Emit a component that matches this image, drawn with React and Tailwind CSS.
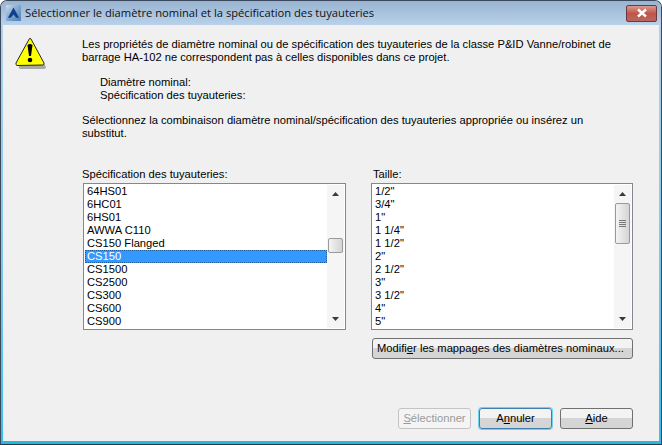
import React from 'react';

const specs = ['64HS01','6HC01','6HS01','AWWA C110','CS150 Flanged','CS150','CS1500','CS2500','CS300','CS600','CS900'];
const sizes = ['1/2"','3/4"','1"','1 1/4"','1 1/2"','2"','2 1/2"','3"','3 1/2"','4"','5"'];
const btnFill = 'bg-gradient-to-b from-[#f3f3f3] from-45% to-[#d5d5d5] to-50% ';

function Warning(){
  return (
    <svg width="32" height="33" viewBox="0 0 32 33">
      <path d="M17 5 L31 30 Q31 32 29 32 L6 32 Q3 32 4 29 Z" fill="#8a8a8a" opacity="0.7" />
      <path d="M14.5 1.5 Q15 1 16 2 L29 26 Q29.5 28 27.5 28 L2 28.5 Q0.5 28 1 26 Z" fill="#ffff00" stroke="#222" strokeWidth="1" strokeLinejoin="round" />
      <path d="M12.5 8 Q15 6 17.5 8 L16 19 L14 19 Z" fill="#000" />
      <circle cx="15" cy="23" r="2.3" fill="#000" />
    </svg>
  );
}

function AppIcon(){
  return (
    <div className="w-[15px] h-[16px] bg-gradient-to-br from-[#cfdcea] via-[#7ea6cf] to-[#4f7fb5] flex items-center justify-center">
      <svg width="13" height="12" viewBox="0 0 14 12">
        <path d="M7 0 L13 11 L10 11 L7 7.5 L4 11 L1 11 Z" fill="#0f3f8a" />
      </svg>
    </div>
  );
}

function Scrollbar({ thumbTop, thumbH, grip }){
  return (
    <div className="w-[17px] shrink-0 bg-[#f5f5f5] flex flex-col items-center relative">
      <svg className="mt-[7px]" width="7" height="4" viewBox="0 0 7 4"><path d="M3.5 0 L7 4 L0 4 Z" fill="#3a3a3a" /></svg>
      <svg className="mt-auto mb-[7px]" width="7" height="4" viewBox="0 0 7 4"><path d="M3.5 4 L7 0 L0 0 Z" fill="#3a3a3a" /></svg>
      <div
        className="absolute left-[1px] w-[15px] rounded-[2px] border border-[#9a9a9a] bg-gradient-to-r from-[#f4f4f4] to-[#d4d4d4] flex flex-col items-center justify-center gap-[1px]"
        style={{ top: thumbTop, height: thumbH }}
      >
        {grip && <>
          <div className="w-[7px] h-px bg-[#777]" />
          <div className="w-[7px] h-px bg-[#777]" />
          <div className="w-[7px] h-px bg-[#777]" />
          <div className="w-[7px] h-px bg-[#777]" />
        </>}
      </div>
    </div>
  );
}

function ListBox({ items, selected, thumbTop, thumbH, grip }){
  return (
    <div className="h-[147px] flex border border-[#828790] bg-white p-px">
      <div className="flex-1 min-w-0">
        {items.map(t => (
          <div
            key={t}
            className={t === selected
              ? 'h-[13px] leading-[13px] pl-[2px] bg-[#3399ff] text-white outline-1 -outline-offset-1 outline-dotted outline-[#1d5fa3]'
              : 'h-[13px] leading-[13px] pl-[2px]'}
          >{t}</div>
        ))}
      </div>
      <Scrollbar thumbTop={thumbTop} thumbH={thumbH} grip={grip} />
    </div>
  );
}

function Btn({ children, className }){
  return (
    <button className={'h-[21px] rounded-[3px] border whitespace-nowrap ' + className}>
      {children}
    </button>
  );
}

export default function App(){
  return (
    <div className="w-[662px] h-[445px] flex flex-col rounded-t-[7px] border border-[#3a4a5c] border-b-[#1c3a4a] bg-gradient-to-b from-[#b9d1ea] to-[#35bfe8] text-[11.2px] text-black font-['Liberation_Sans',Arial,sans-serif] overflow-hidden">
      <div className="h-[24px] shrink-0 bg-gradient-to-b from-[#99b4d1] to-[#b9d1ea] flex items-center pl-[5px] pr-[4px]">
        <AppIcon />
        <div className="ml-[4px] text-[11.2px] font-['Open_Sans',sans-serif] text-[#111]">Sélectionner le diamètre nominal et la spécification des tuyauteries</div>
        <div className="ml-auto w-[31px] h-[17px] rounded-[2px] border border-[#6b3b3b] bg-gradient-to-b from-[#d99a90] via-[#c2544a] to-[#b8675f] flex items-center justify-center">
          <svg width="12" height="10" viewBox="0 0 12 10"><path d="M2 1.5 L10 8.5 M10 1.5 L2 8.5" stroke="#fff" strokeWidth="2.4" /></svg>
        </div>
      </div>
      <div className="mx-[2px] flex-1 bg-[#f0f0f0] flex flex-col pl-[79px] pr-[26px] relative">
        <div className="absolute left-[12px] top-[12px]"><Warning /></div>
        <p className="mt-[13px] leading-[13px]">Les propriétés de diamètre nominal ou de spécification des tuyauteries de la classe P&amp;ID Vanne/robinet de barrage HA-102 ne correspondent pas à celles disponibles dans ce projet.</p>
        <div className="mt-[12px] ml-[18px] leading-[13px]">
          <div>Diamètre nominal:</div>
          <div>Spécification des tuyauteries:</div>
        </div>
        <p className="mt-[12px] leading-[13px] max-w-[530px]">Sélectionnez la combinaison diamètre nominal/spécification des tuyauteries appropriée ou insérez un substitut.</p>
        <div className="mt-[28px] ml-px flex gap-[25px]">
          <div className="w-[263px]">
            <div className="h-[13px] leading-[13px] mb-[2px] -ml-px">Spécification des tuyauteries:</div>
            <ListBox items={specs} selected="CS150" thumbTop={53} thumbH={15} />
          </div>
          <div className="w-[262px]">
            <div className="h-[13px] leading-[13px] mb-[2px] ml-[2px]">Taille:</div>
            <ListBox items={sizes} thumbTop={18} thumbH={41} grip />
            <Btn className={btnFill + 'mt-[8px] w-[261px] ml-px border-[#707070] text-left pl-[4px]'}>Modifi<u>e</u>r les mappages des diamètres nominaux...</Btn>
          </div>
        </div>
        <div className="mt-auto mb-[12px] flex justify-end gap-[6px]">
          <Btn className="w-[73px] mr-[2px] border-[#c4c4c4] bg-[#f4f4f4] text-[#9a9a9a]"><u>S</u>électionner</Btn>
          <Btn className={btnFill + 'w-[73px] mr-[2px] border-[#3c7fb1] shadow-[0_0_0_1px_#6fd0f0]'}>A<u>n</u>nuler</Btn>
          <Btn className={btnFill + 'w-[73px] border-[#707070]'}><u>A</u>ide</Btn>
        </div>
      </div>
      <div className="h-[3px] shrink-0 bg-[#28b8dc]" />
    </div>
  );
}
